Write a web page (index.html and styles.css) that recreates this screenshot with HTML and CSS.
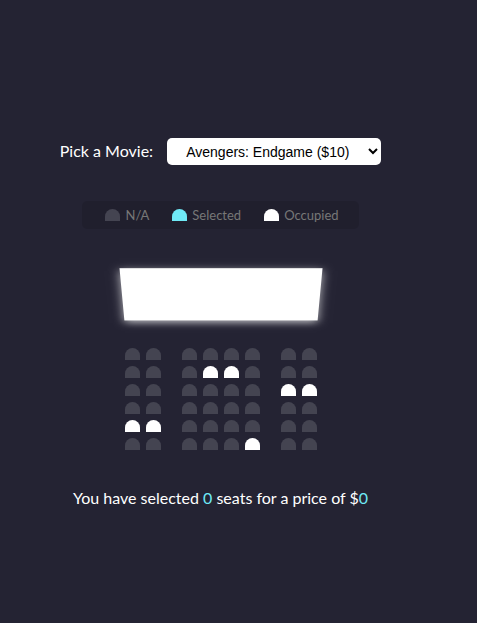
FILE: index.html
```html
<!DOCTYPE html>
<html lang="en">
<head>
<meta charset="UTF-8">
<title>Movie Seat Booking</title>
<link rel="stylesheet" href="styles.css">
</head>
<body>
  <div class="movie-container">
    <label class="movie-label">Pick a Movie:</label>
    <select class="movie-select">
      <option value="10">Avengers: Endgame ($10)</option>
      <option value="12">Joker ($12)</option>
      <option value="8">Toy Story 4 ($8)</option>
      <option value="9">The Lion King ($9)</option>
    </select>
  </div>

  <ul class="showcase">
    <li class="showcase-item"><div class="seat"></div><small class="showcase-label">N/A</small></li>
    <li class="showcase-item"><div class="seat selected"></div><small class="showcase-label">Selected</small></li>
    <li class="showcase-item"><div class="seat occupied"></div><small class="showcase-label">Occupied</small></li>
  </ul>

  <div class="container">
    <div class="screen"></div>
    <div class="row">
      <div class="seat"></div><div class="seat"></div><div class="seat"></div><div class="seat"></div>
      <div class="seat"></div><div class="seat"></div><div class="seat"></div><div class="seat"></div>
    </div>
    <div class="row">
      <div class="seat"></div><div class="seat"></div><div class="seat"></div><div class="seat occupied"></div>
      <div class="seat occupied"></div><div class="seat"></div><div class="seat"></div><div class="seat"></div>
    </div>
    <div class="row">
      <div class="seat"></div><div class="seat"></div><div class="seat"></div><div class="seat"></div>
      <div class="seat"></div><div class="seat"></div><div class="seat occupied"></div><div class="seat occupied"></div>
    </div>
    <div class="row">
      <div class="seat"></div><div class="seat"></div><div class="seat"></div><div class="seat"></div>
      <div class="seat"></div><div class="seat"></div><div class="seat"></div><div class="seat"></div>
    </div>
    <div class="row">
      <div class="seat occupied"></div><div class="seat occupied"></div><div class="seat"></div><div class="seat"></div>
      <div class="seat"></div><div class="seat"></div><div class="seat"></div><div class="seat"></div>
    </div>
    <div class="row">
      <div class="seat"></div><div class="seat"></div><div class="seat"></div><div class="seat"></div>
      <div class="seat"></div><div class="seat occupied"></div><div class="seat"></div><div class="seat"></div>
    </div>
  </div>

  <p class="text">You have selected <span class="count">0</span> seats for a price of $<span class="total">0</span></p>
</body>
</html>
```

FILE: styles.css
```css
* {
  box-sizing: border-box;
}

body {
  background-color: #242333;
  color: #fff;
  display: flex;
  flex-direction: column;
  align-items: center;
  justify-content: center;
  height: 100vh;
  font-family: Lato, "Liberation Sans", sans-serif;
  margin: 0;
  padding: 7px 36px 0 0;
}

.movie-container {
  margin: 20px 0;
  font-size: 16px;
}

.movie-select {
  background-color: #fff;
  color: #000;
  border: 0;
  border-radius: 5px;
  font-family: "Liberation Sans", Arial, sans-serif;
  font-size: 14px;
  margin-left: 10px;
  padding: 5px 15px;
  height: 27px;
}

.container {
  perspective: 1000px;
  margin-bottom: 30px;
}

.seat {
  background-color: #444451;
  height: 12px;
  width: 15px;
  margin: 3px;
  border-top-left-radius: 10px;
  border-top-right-radius: 10px;
}

.seat.selected {
  background-color: #6feaf6;
}

.seat.occupied {
  background-color: #fff;
}

.row .seat:nth-of-type(2) {
  margin-right: 18px;
}

.row .seat:nth-last-of-type(2) {
  margin-left: 18px;
}

.showcase {
  background: rgba(0, 0, 0, 0.1);
  padding: 5px 10px;
  border-radius: 5px;
  color: #777;
  list-style-type: none;
  display: flex;
  justify-content: space-between;
}

.showcase-item {
  display: flex;
  align-items: center;
  justify-content: center;
  margin: 0 10px;
}

.showcase-label {
  margin-left: 2px;
  font-size: 13px;
}

.row {
  display: flex;
}

.screen {
  background-color: #fff;
  height: 70px;
  width: 100%;
  margin: 15px 0;
  transform: rotateX(-45deg);
  box-shadow: 0 3px 10px rgba(255, 255, 255, 0.7);
}

.text {
  margin: 5px 0;
}

.count,
.total {
  color: #6feaf6;
}
```
